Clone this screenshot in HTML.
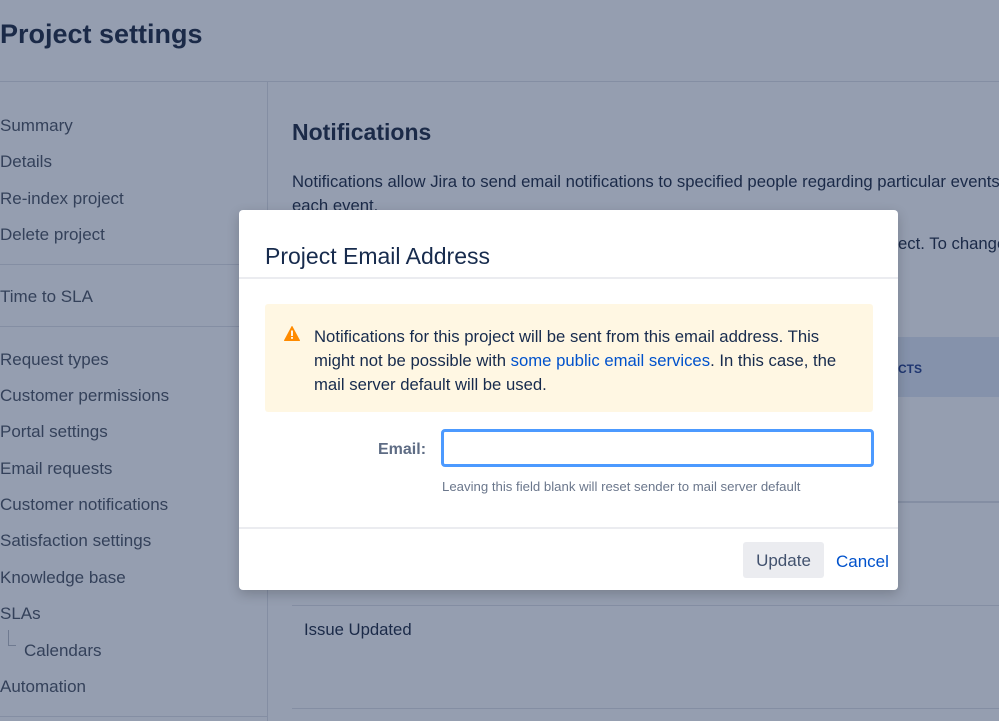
<!DOCTYPE html>
<html><head><meta charset="utf-8"><style>
*{margin:0;padding:0;box-sizing:border-box}
body{width:999px;height:721px;overflow:hidden;background:#959eb0;font-family:"Liberation Sans",sans-serif;position:relative;color:#1b2a48}
.a{position:absolute;white-space:nowrap}
.nav{font-size:17px;color:#34415a}
.hl{position:absolute;height:1px;background:#848ea3}
</style></head><body>
<div class="a" style="left:0;top:19px;font-size:27px;font-weight:bold;color:#1b2a48">Project settings</div>
<div class="hl" style="left:0;top:81px;width:999px"></div>
<div style="position:absolute;left:267px;top:81px;width:1px;height:640px;background:#848ea3"></div>
<div class="a nav" style="left:0;top:116px">Summary</div>
<div class="a nav" style="left:0;top:152px">Details</div>
<div class="a nav" style="left:0;top:189px">Re-index project</div>
<div class="a nav" style="left:0;top:225px">Delete project</div>
<div class="hl" style="left:0;top:264px;width:267px"></div>
<div class="a nav" style="left:0;top:287px">Time to SLA</div>
<div class="hl" style="left:0;top:326px;width:267px"></div>
<div class="a nav" style="left:0;top:350px">Request types</div>
<div class="a nav" style="left:0;top:386px">Customer permissions</div>
<div class="a nav" style="left:0;top:422px">Portal settings</div>
<div class="a nav" style="left:0;top:459px">Email requests</div>
<div class="a nav" style="left:0;top:495px">Customer notifications</div>
<div class="a nav" style="left:0;top:531px">Satisfaction settings</div>
<div class="a nav" style="left:0;top:568px">Knowledge base</div>
<div class="a nav" style="left:0;top:604px">SLAs</div>
<div style="position:absolute;left:8px;top:630px;width:8px;height:16px;border-left:1px solid #6f7a90;border-bottom:1px solid #6f7a90"></div>
<div class="a nav" style="left:24px;top:641px">Calendars</div>
<div class="a nav" style="left:0;top:677px">Automation</div>
<div class="hl" style="left:0;top:716px;width:267px"></div>
<div class="a" style="left:292px;top:119px;font-size:23px;font-weight:bold">Notifications</div>
<div class="a" style="left:292px;top:172px;font-size:16.7px;color:#1b2a48">Notifications allow Jira to send email notifications to specified people regarding particular events</div>
<div class="a" style="left:292px;top:196px;font-size:16.7px">each event.</div>
<div class="a" style="left:898px;top:234px;font-size:16.7px">ect. To change</div>
<div style="position:absolute;left:292px;top:337px;width:707px;height:60px;background:#8592ab"></div>
<div class="a" style="left:898px;top:362px;font-size:12px;font-weight:bold;color:#1e3570">CTS</div>
<div class="hl" style="left:292px;top:501px;width:707px;height:2px;background:#848ea3"></div>
<div class="hl" style="left:292px;top:605px;width:707px"></div>
<div class="a" style="left:304px;top:620px;font-size:16.7px">Issue Updated</div>
<div class="hl" style="left:292px;top:708px;width:707px"></div>

<div style="position:absolute;left:239px;top:210px;width:659px;height:380px;background:#fff;border-radius:4px;box-shadow:0 4px 12px rgba(0,0,0,.2)">
<div class="a" style="left:26px;top:33px;font-size:23px;color:#172b4d">Project Email Address</div>
<div style="position:absolute;left:0;top:67px;width:659px;height:2px;background:#ebecf0"></div>
<div style="position:absolute;left:26px;top:94px;width:608px;height:108px;background:#fff7e3;border-radius:3px">
<svg style="position:absolute;left:19px;top:22px" width="16" height="15" viewBox="0 0 16 15"><path d="M8 0.5L15.5 14.5H0.5Z" fill="#ff8b00" stroke="#ff8b00" stroke-linejoin="round"/><rect x="7.1" y="4.5" width="1.8" height="5.5" fill="#fff"/><rect x="7.1" y="11" width="1.8" height="1.8" fill="#fff"/></svg>
<div style="position:absolute;left:49px;top:21px;width:530px;font-size:16.7px;line-height:24px;color:#172b4d">Notifications for this project will be sent from this email address. This might not be possible with <span style="color:#0052cc">some public email services</span>. In this case, the mail server default will be used.</div>
</div>
<div class="a" style="left:139px;top:231px;font-size:16px;font-weight:bold;color:#5e6c84">Email:</div>
<div style="position:absolute;left:202px;top:219px;width:433px;height:38px;border:3px solid #4c9aff;border-radius:4px"></div>
<div class="a" style="left:203px;top:269px;font-size:13.2px;color:#6b778c">Leaving this field blank will reset sender to mail server default</div>
<div style="position:absolute;left:0;top:317px;width:659px;height:2px;background:#ebecf0"></div>
<div style="position:absolute;left:504px;top:332px;width:81px;height:36px;background:#ebecf0;border-radius:3px;font-size:17px;color:#42526e;text-align:center;line-height:38px">Update</div>
<div class="a" style="left:597px;top:342px;font-size:17px;color:#0052cc">Cancel</div>
</div>
</body></html>
